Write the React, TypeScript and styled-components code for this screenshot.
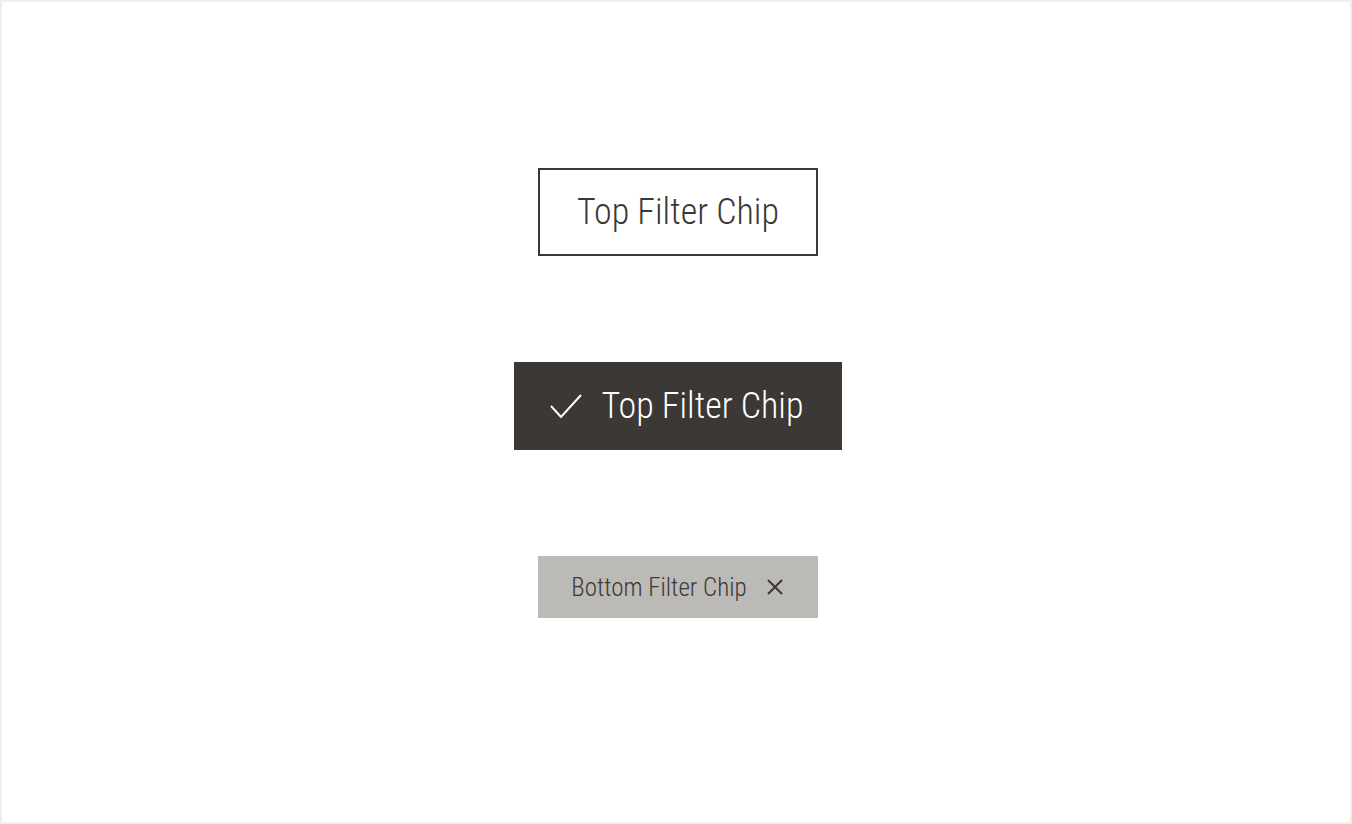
import React from "react";
import styled, { createGlobalStyle } from "styled-components";

const Global = createGlobalStyle`
  html, body { margin: 0; padding: 0; background: #fff; }
  * { box-sizing: border-box; }
`;

const ink = "#3b3835";

const Frame = styled.main`
  width: 1352px;
  height: 824px;
  border: 2px solid #efefef;
  background: #fff;
  display: flex;
  flex-direction: column;
  align-items: center;
  padding: 166px 0 0 4px;
  gap: 106px;
  font-family: "Roboto Condensed", Roboto, sans-serif;
  font-weight: 300;
`;

const TopChip = styled.button<{ $selected?: boolean }>`
  display: flex;
  align-items: center;
  gap: 20px;
  height: 88px;
  margin: 0;
  padding: ${(p) => (p.$selected ? "0 39px 0 36px" : "0 37px")};
  border: ${(p) => (p.$selected ? "none" : `2px solid ${ink}`)};
  border-radius: 0;
  background: ${(p) => (p.$selected ? ink : "#fff")};
  color: ${(p) => (p.$selected ? "#fff" : ink)};
  font-family: inherit;
  font-weight: 300;
  font-size: 36px;
  line-height: 1;
  white-space: nowrap;
  cursor: pointer;
`;

const BottomChip = styled.button`
  display: flex;
  align-items: center;
  gap: 20px;
  height: 62px;
  margin: 0;
  padding: 0 35px 0 33px;
  border: none;
  border-radius: 0;
  background: #bbbab6;
  color: ${ink};
  font-family: inherit;
  font-weight: 300;
  font-size: 25px;
  line-height: 1;
  white-space: nowrap;
  cursor: pointer;
`;

const Icon = styled.svg`
  display: block;
  flex: none;
`;

const CheckIcon = () => (
  <Icon width="32" height="24" viewBox="0 0 32 24" fill="none">
    <polyline points="1,12 11,23 31,1" stroke="#fff" strokeWidth="2" />
  </Icon>
);

const CloseIcon = () => (
  <Icon width="16" height="16" viewBox="0 0 16 16" fill="none">
    <path d="M1 1 L15 15 M15 1 L1 15" stroke={ink} strokeWidth="2" />
  </Icon>
);

export default function App() {
  return (
    <>
      <Global />
      <Frame>
        <TopChip>Top Filter Chip</TopChip>
        <TopChip $selected>
          <CheckIcon />
          Top Filter Chip
        </TopChip>
        <BottomChip>
          Bottom Filter Chip
          <CloseIcon />
        </BottomChip>
      </Frame>
    </>
  );
}
